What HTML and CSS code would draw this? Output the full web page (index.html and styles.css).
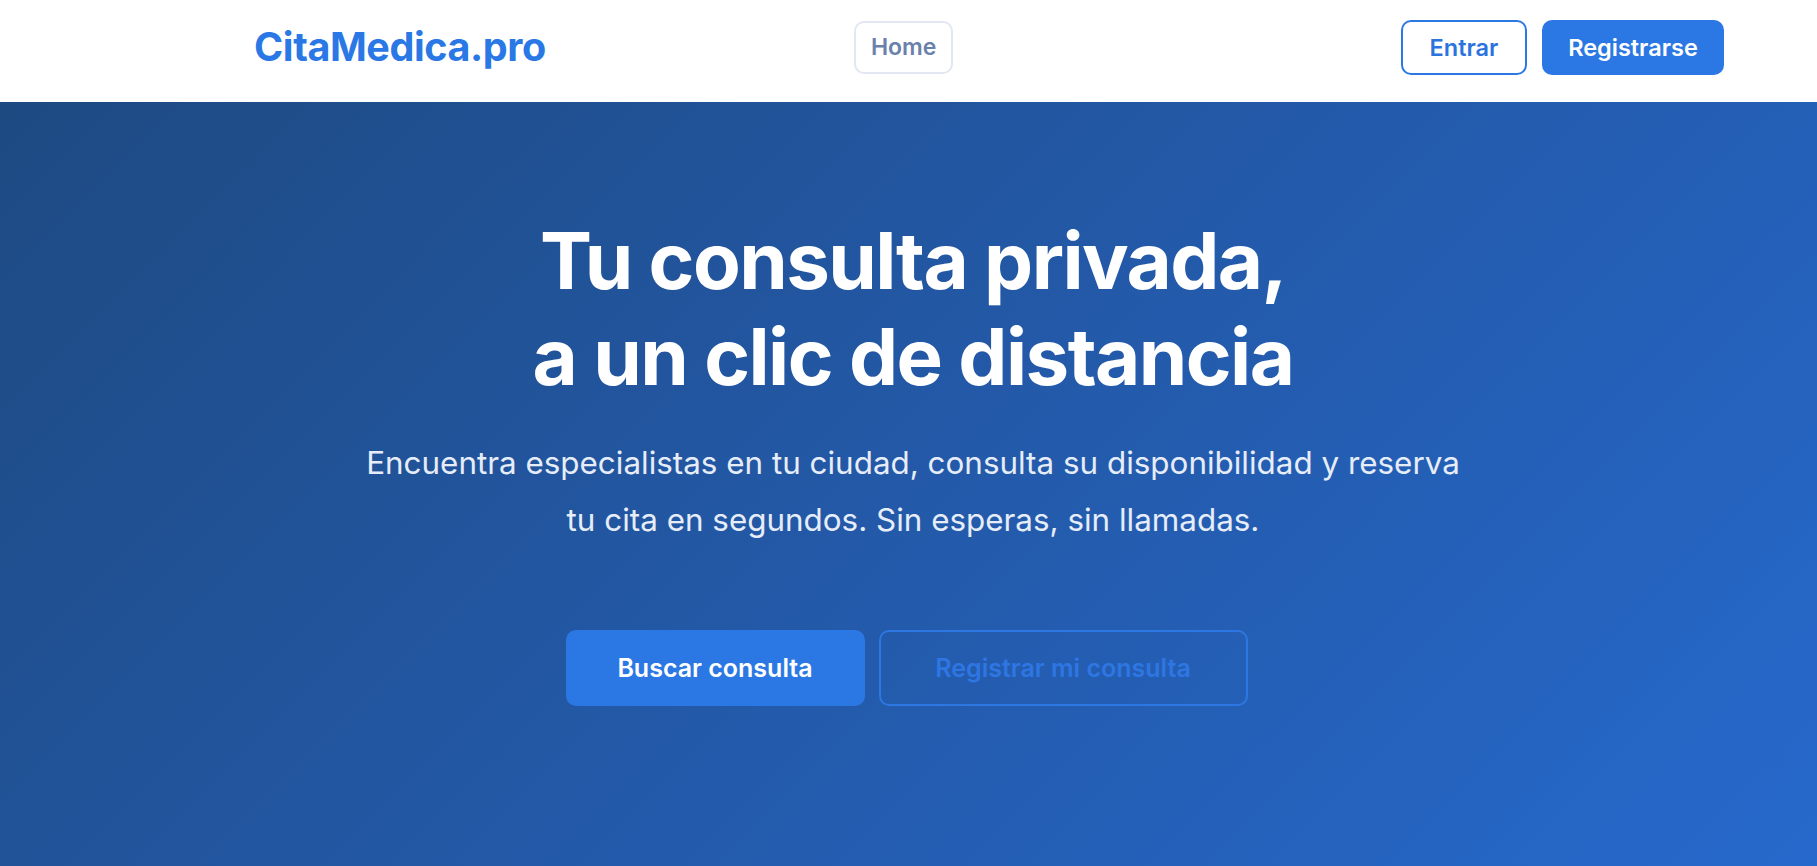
FILE: index.html
```html
<!DOCTYPE html>
<html lang="es">

<head>
    <meta charset="UTF-8">
    <meta name="viewport" content="width=device-width, initial-scale=1.0">
    <title>CitaMedica.pro</title>
    <link rel="stylesheet" href="styles.css">
</head>

<body>
    <header class="topbar">
        <a href="#" class="logo">CitaMedica.pro</a>

        <nav class="nav">
            <a href="#" class="nav-link">Home</a>
        </nav>

        <div class="auth">
            <a href="#" class="btn btn-outline">Entrar</a>
            <a href="#" class="btn btn-solid">Registrarse</a>
        </div>
    </header>

    <section class="hero">
        <h1>Tu consulta privada,<br>a un clic de distancia</h1>
        <p class="lead">Encuentra especialistas en tu ciudad, consulta su disponibilidad y reserva<br>tu cita en segundos. Sin esperas, sin llamadas.</p>

        <div class="hero-actions">
            <a href="#" class="cta cta-primary">Buscar consulta</a>
            <a href="#" class="cta cta-ghost">Registrar mi consulta</a>
        </div>
    </section>
</body>

</html>
```

FILE: styles.css
```css
* {
    box-sizing: border-box;
    margin: 0;
    padding: 0;
    font-family: 'Inter', 'Noto Sans', sans-serif;
}

a {
    text-decoration: none;
}

body {
    background: #ffffff;
    min-height: 100vh;
}

/* top navigation */
.topbar {
    height: 102px;
    display: flex;
    align-items: center;
    padding: 0 93px 8px 254px;
    background: #ffffff;
}

.logo {
    color: #2a78e6;
    font-size: 39.5px;
    font-weight: 700;
    letter-spacing: -0.01em;
}

.nav {
    margin-left: 308px;
}

.nav-link {
    display: inline-flex;
    align-items: center;
    height: 53px;
    padding: 0 15px;
    border: 2px solid #e1e8f3;
    border-radius: 10px;
    color: #6a81ab;
    font-size: 23px;
    font-weight: 600;
}

.auth {
    margin-left: auto;
    display: flex;
    gap: 15px;
}

.btn {
    display: inline-flex;
    align-items: center;
    justify-content: center;
    height: 55px;
    border-radius: 10px;
    font-size: 23.5px;
    font-weight: 600;
}

.btn-outline {
    width: 126px;
    border: 2px solid #2b78e4;
    color: #2b74de;
    background: #ffffff;
}

.btn-solid {
    width: 182px;
    background: #2b78e4;
    color: #ffffff;
}

/* hero */
.hero {
    min-height: calc(100vh - 102px);
    background: linear-gradient(135deg, #1e4a82 0%, #2359a8 50%, #2669cc 100%);
    text-align: center;
    padding-top: 111px;
    color: #ffffff;
}

.hero h1 {
    padding-left: 9px;
    font-size: 78px;
    font-weight: 700;
    line-height: 96px;
    letter-spacing: -0.02em;
}

.lead {
    margin-top: 30px;
    padding-left: 9px;
    font-size: 31.4px;
    line-height: 57px;
    color: #e6edf8;
}

.hero-actions {
    margin-top: 81px;
    margin-left: -4px;
    display: flex;
    justify-content: center;
    gap: 14px;
}

.cta {
    display: inline-flex;
    align-items: center;
    justify-content: center;
    height: 76px;
    border-radius: 10px;
    font-size: 25px;
    font-weight: 600;
}

.cta-primary {
    width: 299px;
    background: #2b78e4;
    color: #ffffff;
}

.cta-ghost {
    width: 369px;
    border: 2px solid #2d77e2;
    color: #2e76e2;
}
```
